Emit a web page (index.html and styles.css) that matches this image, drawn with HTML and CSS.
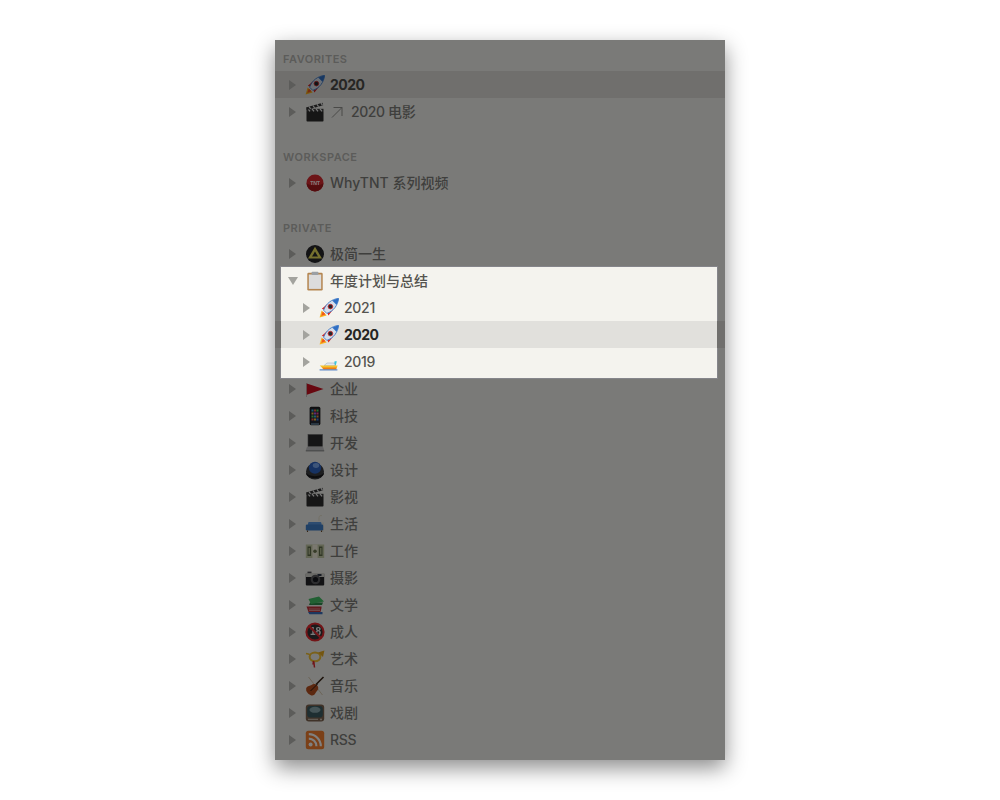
FILE: index.html
```html
<!DOCTYPE html>
<html lang="zh">
<head>
    <meta charset="UTF-8">
    <title>Sidebar</title>
    <link rel="stylesheet" href="styles.css">
</head>
<body>
    <svg class="sprites" width="0" height="0">
        <defs>
            <symbol id="i-rocket" viewBox="0 0 20 20">
                <path d="M.6 19.6 2.6 12.6 7.6 17.6Z" fill="#f7b21c"/>
                <path d="M2.2 18 3.8 13.5 6.6 16.2Z" fill="#f0551e"/>
                <path d="M2.8 10.8 9 5.5 7 12.5Z" fill="#d5231f"/>
                <path d="M9.4 17.4 14.6 11 7.6 13Z" fill="#d5231f"/>
                <path d="M4.6 12.2C7 5.5 12.6 1.2 19.6.4 18.8 7.4 14.6 13 7.8 15.4Z" fill="#d5deea" stroke="#3f7ac6" stroke-width=".9"/>
                <path d="M13.2 2.6C15.4 1.4 17.4.7 19.6.4 19.3 2.6 18.6 4.8 17.4 6.8Z" fill="#2f6fc4"/>
                <circle cx="11.4" cy="8.6" r="2.3" fill="#21262e" stroke="#c72b2b" stroke-width=".9"/>
            </symbol>
            <symbol id="i-clapper" viewBox="0 0 20 20">
                <rect x="1.5" y="9" width="17" height="10.5" rx=".8" fill="#2b2b2b"/>
                <rect x="1.5" y="6.8" width="17" height="2.6" fill="#3c3c3c"/>
                <path d="M3 6.8 5 9.4M7 6.8 9 9.4M11 6.8 13 9.4M15 6.8 17 9.4" stroke="#eee" stroke-width="1.2"/>
                <path d="M1 5.5 17.5.8 18.2 3.2 1.7 8Z" fill="#333"/>
                <path d="M4 4.7 5.6 6.9M8 3.5 9.6 5.8M12 2.4 13.6 4.6M16 1.2 17.5 3.4" stroke="#eee" stroke-width="1.2"/>
            </symbol>
            <symbol id="i-tnt" viewBox="0 0 20 20">
                <circle cx="10" cy="10" r="8.5" fill="#d92a30"/>
                <path d="M1.5 10a8.5 8.5 0 0 0 17 0c-2 3-15 3-17 0Z" fill="#a81a1e"/>
                <text x="10" y="11.8" text-anchor="middle" font-family="Liberation Sans" font-size="5" font-weight="700" fill="#fff">TNT</text>
            </symbol>
            <symbol id="i-circle" viewBox="0 0 20 20">
                <circle cx="10" cy="10" r="9" fill="#26262a"/>
                <path d="M10 2.8 17 14.6H3Z" fill="#e9e05c"/>
                <path d="M10 7.6 13 12.6H7Z" fill="#26262a"/>
            </symbol>
            <symbol id="i-board" viewBox="0 0 20 20">
                <rect x="2.3" y="1.8" width="15.4" height="17.6" rx="1.2" fill="#b4854f"/>
                <rect x="3.8" y="3.5" width="12.4" height="14.4" fill="#dcdcdc"/>
                <rect x="6.6" y=".8" width="6.8" height="3.2" rx=".8" fill="#9ba0a5"/>
            </symbol>
            <symbol id="i-boat" viewBox="0 0 20 20">
                <path d="M15.6 9.2h2.2l-1 4.2h-2z" fill="#37c5dc"/>
                <path d="M5 13.6 8 11h7l1.5 2.6z" fill="#e2e8ee" stroke="#8fa3b5" stroke-width=".5"/>
                <path d="M.8 13.6h17.8l-1 2.6H3.5Z" fill="#f7c32a"/>
                <path d="M3 15.6h14.8l-.6 2H4.5Z" fill="#ee7d16"/>
                <path d="M.6 17.4h17.8v1H.6Z" fill="#3a6fc0"/>
            </symbol>
            <symbol id="i-flag" viewBox="0 0 20 20">
                <path d="M1.4 4v14" stroke="#b0b0b0" stroke-width=".8"/>
                <path d="M1.8 4.5 18.5 10 1.8 15.8Z" fill="#d0101f"/>
            </symbol>
            <symbol id="i-phone" viewBox="0 0 20 20">
                <rect x="4.6" y=".8" width="10.8" height="18.4" rx="1.6" fill="#1d1d1f"/>
                <rect x="5.6" y="2.5" width="8.8" height="14.5" fill="#232a38"/>
                <path d="M6.5 3.5h2v2h-2z" fill="#3fb2e4"/><path d="M9 3.5h2v2H9z" fill="#ff5a3f"/><path d="M11.5 3.5h2v2h-2z" fill="#57d95a"/>
                <path d="M6.5 6.5h2v2h-2z" fill="#f7c33f"/><path d="M9 6.5h2v2H9z" fill="#b35af0"/><path d="M11.5 6.5h2v2h-2z" fill="#f44f8f"/>
                <path d="M6.5 9.5h2v2h-2z" fill="#57d95a"/><path d="M9 9.5h2v2H9z" fill="#3fb2e4"/><path d="M11.5 9.5h2v2h-2z" fill="#f7903f"/>
                <path d="M6.5 12.5h2v2h-2z" fill="#ff5a3f"/><path d="M9 12.5h2v2H9z" fill="#f7c33f"/><path d="M11.5 12.5h2v2h-2z" fill="#3f7ce4"/>
                <path d="M6 17.5h8v1H6z" fill="#8fc1e8"/>
            </symbol>
            <symbol id="i-laptop" viewBox="0 0 20 20">
                <rect x="3" y="1.5" width="14.5" height="12" fill="#2a2a2c" stroke="#6a6a6c" stroke-width=".6"/>
                <path d="M2 13.8h16l1.2 3.4H.8Z" fill="#c5c6c8"/>
                <path d="M.8 17.2h18.4v1.2H.8Z" fill="#8a8b8d"/>
            </symbol>
            <symbol id="i-ball" viewBox="0 0 20 20">
                <ellipse cx="10" cy="11.5" rx="9" ry="8" fill="#3a3b40"/>
                <path d="M1 12c1 5.5 17 5.5 18 0v1.5c-1 6-17 6-18 0z" fill="#17171a"/>
                <ellipse cx="10" cy="7.8" rx="6.2" ry="6" fill="#2d63c4"/>
                <ellipse cx="11" cy="5.5" rx="3.2" ry="2.4" fill="#79aaf2"/>
            </symbol>
            <symbol id="i-sofa" viewBox="0 0 20 20">
                <path d="M14 7V3.5C14 1.5 16 1.2 17 1.8M18 8.5V18" fill="none" stroke="#e4dfc8" stroke-width=".9"/>
                <rect x="3" y="8" width="13.5" height="6" rx="1.4" fill="#5a97df"/>
                <rect x=".8" y="10.5" width="17.4" height="6" rx="1.2" fill="#3f7fca"/>
                <path d="M2.5 16.5v1.5M16.5 16.5v1.5" stroke="#6b4a2d" stroke-width="1.1"/>
            </symbol>
            <symbol id="i-money" viewBox="0 0 20 20">
                <rect x=".8" y="3.5" width="18.4" height="13.5" fill="#c5cba8"/>
                <rect x="7.4" y="3.5" width="5.2" height="13.5" fill="#f4f0de"/>
                <circle cx="10" cy="10.2" r="1.8" fill="#6f7a52"/>
                <path d="M2.5 5.5h3.5v9.5H2.5zM14 5.5h3.5v9.5H14z" fill="#5f6c4a"/>
                <path d="M3.5 7h1.5v6.5H3.5zM15 7h1.5v6.5H15z" fill="#b0b890"/>
            </symbol>
            <symbol id="i-camera" viewBox="0 0 20 20">
                <rect x=".8" y="5" width="18.4" height="12.5" rx="1" fill="#252527"/>
                <rect x=".8" y="5" width="18.4" height="4" fill="#d5d5d0"/>
                <rect x="2.5" y="3.6" width="4" height="1.6" fill="#55555a"/>
                <rect x="12.5" y="6" width="4" height="2" fill="#30384a"/>
                <circle cx="10.5" cy="11.5" r="4.8" fill="#5a5a5e"/>
                <circle cx="10.5" cy="11.5" r="2.6" fill="#14161c"/>
            </symbol>
            <symbol id="i-books" viewBox="0 0 20 20">
                <path d="M3 17h14.5v2.2H4.5Z" fill="#3a6fc0"/>
                <path d="M1.5 11.5h15v1.5l-1 4H3.5Z" fill="#c5323a"/>
                <path d="M4 14h11M4 15.5h11" stroke="#eee" stroke-width=".5"/>
                <path d="M5 7.5h13l-1 2.5H4Z" fill="#2e8e4c"/>
                <path d="M3.5 4 14 1.5 19 6.5 6 9Z" fill="#44c066"/>
            </symbol>
            <symbol id="i-no18" viewBox="0 0 20 20">
                <circle cx="10" cy="10" r="8.6" fill="#333336" stroke="#e62a30" stroke-width="2"/>
                <text x="10.5" y="13.4" text-anchor="middle" font-family="Liberation Sans" font-size="10" font-weight="700" fill="#f4f4f4">18</text>
                <path d="M3.8 3.8 16.2 16.2" stroke="#e62a30" stroke-width="2"/>
            </symbol>
            <symbol id="i-horn" viewBox="0 0 20 20">
                <ellipse cx="10" cy="7.8" rx="5.4" ry="4.4" fill="none" stroke="#f5c233" stroke-width="2"/>
                <path d="M1 4.5C3 4.8 4 5.2 6 6" stroke="#f5c233" stroke-width="1.6" fill="none"/>
                <path d="M13 3.5 19.4 1.5 18 8Z" fill="#e8ab20"/>
                <path d="M8.5 12 8 15.5M8.8 12.5 9.5 18.5" stroke="#e02a32" stroke-width="1.5"/>
            </symbol>
            <symbol id="i-violin" viewBox="0 0 20 20">
                <path d="M3.5 1 17.5 19" stroke="#d5c4a8" stroke-width=".9"/>
                <path d="M18.5 1 11 8.5" stroke="#3a2618" stroke-width="1.6"/>
                <path d="M1.2 12C3 9.5 5 10 6.5 9 8 7.5 11 7.5 12.5 9.8 14 12 13 14 12 15 10.5 16.5 10 19.4 7.2 19.4 5 19.4 2 16.8 1.2 14.4Z" fill="#b8501f"/>
                <path d="M5.5 15 12.5 8" stroke="#2a1a10" stroke-width="1"/>
            </symbol>
            <symbol id="i-tv" viewBox="0 0 20 20">
                <rect x=".8" y="1.5" width="18.4" height="17" rx="3" fill="#7d6350"/>
                <rect x="2.2" y="3" width="15.6" height="11.5" rx="3" fill="#3c5c62"/>
                <ellipse cx="10" cy="6.8" rx="5.5" ry="3" fill="#8aa9ae"/>
                <path d="M3 16.3h10" stroke="#e0d7c8" stroke-width=".9"/>
                <circle cx="16" cy="16.4" r=".9" fill="#e0d7c8"/>
            </symbol>
            <symbol id="i-rss" viewBox="0 0 20 20">
                <rect x=".8" y=".8" width="18.4" height="18.4" rx="2.5" fill="#f5812f"/>
                <circle cx="5.6" cy="14.6" r="2" fill="#fff"/>
                <path d="M3.8 8.6a7.6 7.6 0 0 1 7.6 7.6M3.8 4.2a12 12 0 0 1 12 12" fill="none" stroke="#fff" stroke-width="2.2"/>
            </symbol>
        </defs>
    </svg>

    <main class="panel">
        <section class="section">
            <h2 class="section-title">FAVORITES</h2>
            <div class="row row-active"><span class="caret"></span><svg class="icon"><use href="#i-rocket"/></svg><span class="label label-latin">2020</span></div>
            <div class="row">
                <span class="caret"></span><svg class="icon"><use href="#i-clapper"/></svg>
                <svg class="link-arrow" viewBox="0 0 12 12"><path d="M1 11.5 11 1.5M2.5 1.5H11V10" fill="none" stroke="#4a4a48" stroke-width="1"/></svg>
                <span class="label label-mixed">2020 电影</span>
            </div>
        </section>

        <section class="section">
            <h2 class="section-title">WORKSPACE</h2>
            <div class="row"><span class="caret"></span><svg class="icon"><use href="#i-tnt"/></svg><span class="label">WhyTNT 系列视频</span></div>
        </section>

        <section class="section">
            <h2 class="section-title">PRIVATE</h2>
            <div class="row"><span class="caret"></span><svg class="icon"><use href="#i-circle"/></svg><span class="label">极简一生</span></div>

            <div class="spot">
                <div class="row"><span class="caret caret-open"></span><svg class="icon"><use href="#i-board"/></svg><span class="label">年度计划与总结</span></div>
                <div class="row row-child"><span class="caret"></span><svg class="icon"><use href="#i-rocket"/></svg><span class="label label-latin">2021</span></div>
                <div class="row row-child row-active"><span class="caret"></span><svg class="icon"><use href="#i-rocket"/></svg><span class="label label-latin">2020</span></div>
                <div class="row row-child"><span class="caret"></span><svg class="icon"><use href="#i-boat"/></svg><span class="label label-latin">2019</span></div>
            </div>

            <div class="row"><span class="caret"></span><svg class="icon"><use href="#i-flag"/></svg><span class="label">企业</span></div>
            <div class="row"><span class="caret"></span><svg class="icon"><use href="#i-phone"/></svg><span class="label">科技</span></div>
            <div class="row"><span class="caret"></span><svg class="icon"><use href="#i-laptop"/></svg><span class="label">开发</span></div>
            <div class="row"><span class="caret"></span><svg class="icon"><use href="#i-ball"/></svg><span class="label">设计</span></div>
            <div class="row"><span class="caret"></span><svg class="icon"><use href="#i-clapper"/></svg><span class="label">影视</span></div>
            <div class="row"><span class="caret"></span><svg class="icon"><use href="#i-sofa"/></svg><span class="label">生活</span></div>
            <div class="row"><span class="caret"></span><svg class="icon"><use href="#i-money"/></svg><span class="label">工作</span></div>
            <div class="row"><span class="caret"></span><svg class="icon"><use href="#i-camera"/></svg><span class="label">摄影</span></div>
            <div class="row"><span class="caret"></span><svg class="icon"><use href="#i-books"/></svg><span class="label">文学</span></div>
            <div class="row"><span class="caret"></span><svg class="icon"><use href="#i-no18"/></svg><span class="label">成人</span></div>
            <div class="row"><span class="caret"></span><svg class="icon"><use href="#i-horn"/></svg><span class="label">艺术</span></div>
            <div class="row"><span class="caret"></span><svg class="icon"><use href="#i-violin"/></svg><span class="label">音乐</span></div>
            <div class="row"><span class="caret"></span><svg class="icon"><use href="#i-tv"/></svg><span class="label">戏剧</span></div>
            <div class="row"><span class="caret"></span><svg class="icon"><use href="#i-rss"/></svg><span class="label label-latin">RSS</span></div>
        </section>
    </main>
</body>
</html>
```

FILE: styles.css
```css
html, body {
    height: 100%;
}
body {
    margin: 0;
    padding-top: 40px;
    box-sizing: border-box;
    background-color: #fff;
    font-family: Inter, "Noto Sans CJK SC", sans-serif;
}
.sprites {
    display: block;
}
.panel {
    width: 450px;
    height: 720px;
    margin: 0 auto;
    padding-top: 7px;
    box-sizing: border-box;
    background-color: #7a7a78;
    box-shadow: 0 8px 20px rgba(0, 0, 0, 0.45);
}
.section {
    margin-bottom: 20px;
}
.section:last-child {
    margin-bottom: 0;
}
.section-title {
    height: 24px;
    margin: 0;
    padding-left: 8px;
    font-size: 11px;
    font-weight: 600;
    line-height: 24px;
    letter-spacing: 0.5px;
    color: #5c5c5a;
}
.row {
    display: flex;
    align-items: center;
    height: 27px;
    padding-left: 14px;
    font-size: 14px;
    font-weight: 500;
    color: #3f3f3d;
}
/* CJK fallback sits a pixel low in the line box */
.label {
    padding-bottom: 2px;
}
.label-latin {
    padding-bottom: 0;
    letter-spacing: -0.3px;
}
.label-mixed {
    letter-spacing: -0.4px;
}
.row-active {
    background-color: #706f6d;
    color: #262624;
    font-weight: 700;
}
.row-active .label-latin {
    letter-spacing: -0.5px;
}
.caret {
    width: 0;
    height: 0;
    margin-right: 9px;
    border-left: 7px solid #5c5c5a;
    border-top: 5px solid transparent;
    border-bottom: 5px solid transparent;
}
.caret-open {
    margin-left: -1px;
    margin-right: 7px;
    border-left: 5px solid transparent;
    border-right: 5px solid transparent;
    border-top: 8px solid #a3a39e;
    border-bottom: 0;
}
.icon {
    flex: none;
    width: 20px;
    height: 20px;
    margin-right: 5px;
    filter: brightness(0.5);
}
.link-arrow {
    width: 12px;
    height: 12px;
    margin: 0 8px 0 1px;
}

/* highlighted group, not dimmed */
.spot {
    position: relative;
    margin: 0 8px -3px 6px;
    padding-bottom: 3px;
    background-color: #f4f3ee;
    box-shadow: 0 0 0 1px #85858a;
}
.spot .row {
    padding-left: 8px;
    color: #55544f;
}
.spot .row-child {
    padding-left: 22px;
}
.spot .row-active {
    background-color: #e1e0dc;
    color: #252522;
    box-shadow: -6px 0 0 #706f6d, 8px 0 0 #706f6d;
}
.spot .caret {
    border-left-color: #a3a39e;
}
.spot .caret-open {
    border-left-color: transparent;
    border-top-color: #a3a39e;
}
.spot .icon {
    filter: none;
}
```
